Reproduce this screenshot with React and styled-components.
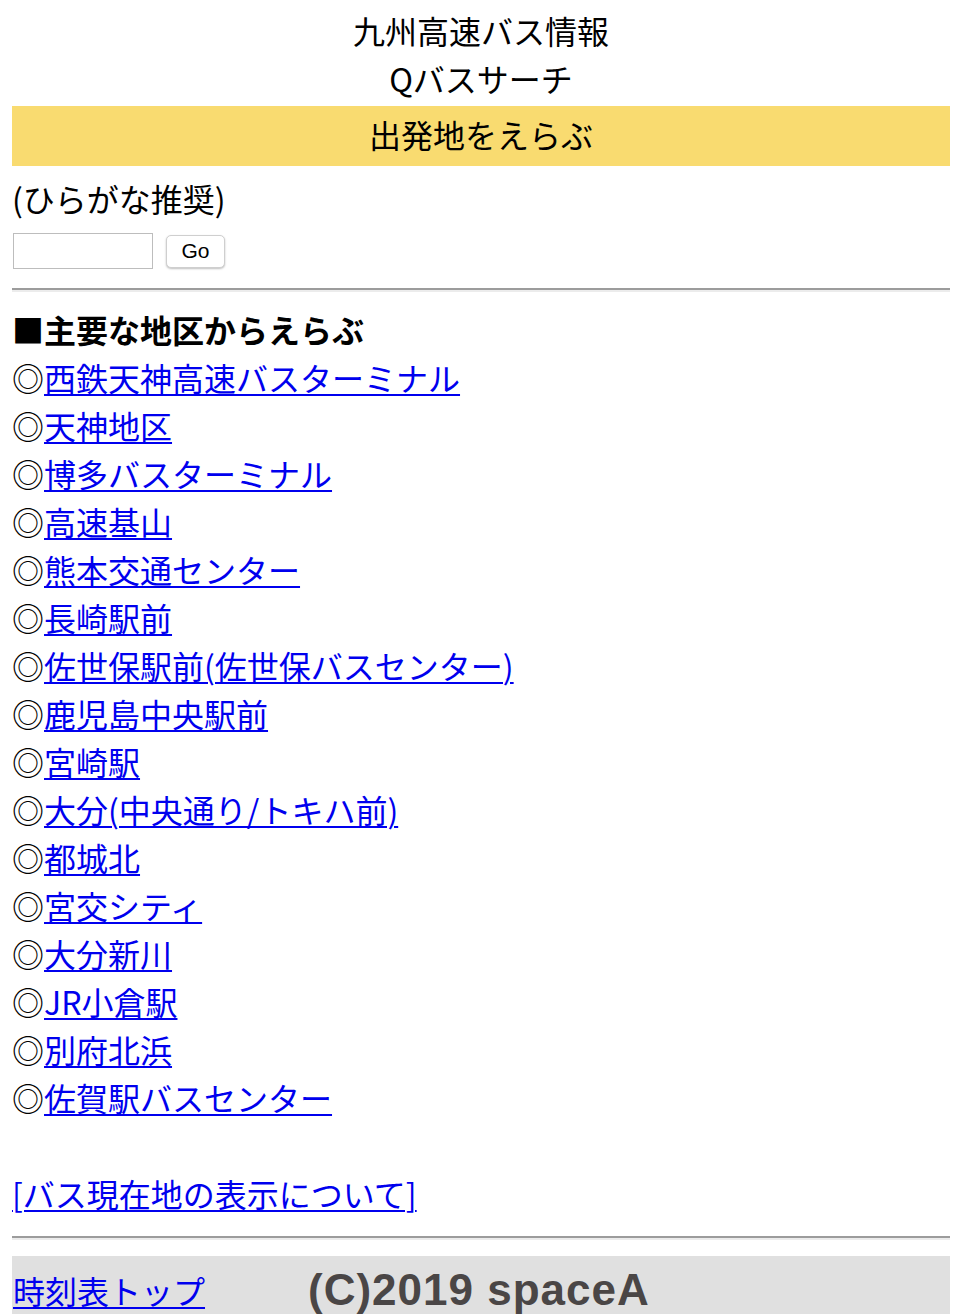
import React from 'react';
import styled, { createGlobalStyle } from 'styled-components';

const GlobalStyle = createGlobalStyle`
  body {
    margin: 0;
    background: #fff;
    font-family: "Noto Sans CJK JP", "Noto Sans", sans-serif;
    font-size: 32px;
    color: #000;
  }
`;

const Page = styled.div`
  padding: 6px 12px 0;
  line-height: 48px;
`;

const Title = styled.div`
  text-align: center;
`;

const Banner = styled.div`
  margin-top: 4px;
  padding: 4px 0 8px;
  background: #f9db70;
  text-align: center;
`;

const Hint = styled.div`
  margin-top: 8px;
`;

const SearchRow = styled.form`
  display: flex;
  align-items: center;
  gap: 13px;
  margin-top: 11px;
  height: 36px;
  padding-left: 1px;
`;

const TextInput = styled.input`
  box-sizing: border-box;
  width: 140px;
  height: 36px;
  border: 1px solid #bdbdbd;
  margin: 0;
  padding: 2px 4px;
  font-size: 20px;
`;

const GoButton = styled.button`
  box-sizing: border-box;
  width: 59px;
  height: 33px;
  border: 1px solid #cfcfcf;
  border-radius: 5px;
  background: #fff;
  box-shadow: 0 1px 2px rgba(0, 0, 0, 0.25);
  font-family: "Liberation Sans", Arial, sans-serif;
  font-size: 21px;
  color: #000;
  padding: 0;
`;

const Rule = styled.hr`
  margin: ${p => p.$top}px 0 0;
  height: 0;
  border: none;
  border-top: 2px solid #9c9c9c;
  border-bottom: 2px solid #ececec;
`;

const Heading = styled.div`
  margin-top: 13px;
  font-weight: 700;
`;

const List = styled.ul`
  list-style: none;
  margin: 0;
  padding: 0;
`;

const Item = styled.li`
  white-space: nowrap;
`;

const Link = styled.a`
  color: #0000ee;
  text-decoration: underline;
  text-decoration-thickness: 2px;
  text-underline-offset: 3px;
`;

const Note = styled.div`
  margin-top: 48px;
`;

const Footer = styled.div`
  display: flex;
  align-items: center;
  gap: 103px;
  margin-top: 16px;
  padding: 10px 0 0 1px;
  background: #e0e0e0;
`;

const Copyright = styled.span`
  font-family: "Liberation Sans", Arial, sans-serif;
  font-weight: 700;
  font-size: 44px;
  letter-spacing: 1px;
  color: #4a4646;
`;

const places = [
  '西鉄天神高速バスターミナル',
  '天神地区',
  '博多バスターミナル',
  '高速基山',
  '熊本交通センター',
  '長崎駅前',
  '佐世保駅前(佐世保バスセンター)',
  '鹿児島中央駅前',
  '宮崎駅',
  '大分(中央通り/トキハ前)',
  '都城北',
  '宮交シティ',
  '大分新川',
  'JR小倉駅',
  '別府北浜',
  '佐賀駅バスセンター',
];

export default function App() {
  return (
    <>
      <GlobalStyle />
      <Page>
        <Title>
          九州高速バス情報
          <br />
          Qバスサーチ
        </Title>
        <Banner>出発地をえらぶ</Banner>
        <Hint>(ひらがな推奨)</Hint>
        <SearchRow onSubmit={e => e.preventDefault()}>
          <TextInput type="text" />
          <GoButton type="submit">Go</GoButton>
        </SearchRow>
        <Rule $top={19} />
        <Heading>■主要な地区からえらぶ</Heading>
        <List>
          {places.map(p => (
            <Item key={p}>
              ◎<Link href="#">{p}</Link>
            </Item>
          ))}
        </List>
        <Note>
          <Link href="#">[バス現在地の表示について]</Link>
        </Note>
        <Rule $top={19} />
        <Footer>
          <Link href="#">時刻表トップ</Link>
          <Copyright>(C)2019 spaceA</Copyright>
        </Footer>
      </Page>
    </>
  );
}
